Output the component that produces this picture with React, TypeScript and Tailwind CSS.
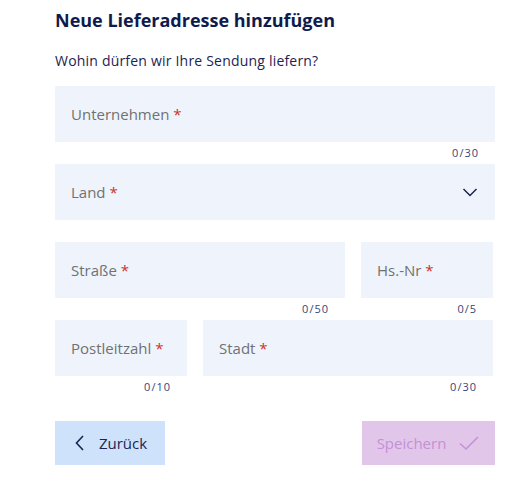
import React from 'react';

type FieldProps = { label: string; max?: number; className?: string; select?: boolean };

function Field({ label, max, className = '', select }: FieldProps) {
  return (
    <div className={`flex flex-col ${className}`}>
      <div className="h-[56px] bg-[#eff4fc] flex items-center justify-between pl-4 pr-4">
        <span className="text-[15px] text-[#717171]">
          {label} <span className="text-[#d0312d]">*</span>
        </span>
        {select && (
          <svg width="18" height="18" viewBox="0 0 18 18" fill="none" stroke="#1b2452" strokeWidth="1.5">
            <path d="M2.5 6 L9 12.5 L15.5 6" />
          </svg>
        )}
      </div>
      <div className="h-[22px] flex items-center justify-end pr-[16px] text-[11px] tracking-[1px] text-[#3a4378]">
        {max !== undefined ? `0/${max}` : ''}
      </div>
    </div>
  );
}

export default function App() {
  return (
    <main className="w-[532px] h-[490px] bg-white pl-[55px] pr-[37px] pt-[8px]" style={{ fontFamily: '"Open Sans", "Liberation Sans", sans-serif' }}>
      <h1 className="text-[18px] font-bold text-[#0f1b4c] leading-[24px]">Neue Lieferadresse hinzufügen</h1>
      <p className="mt-[19px] text-[14px] tracking-[0.2px] text-[#1b2452] leading-[20px]">Wohin dürfen wir Ihre Sendung liefern?</p>

      <div className="mt-[15px] flex flex-col">
        <Field label="Unternehmen" max={30} />
        <Field label="Land" select />
        <div className="flex gap-4">
          <Field label="Straße" max={50} className="w-[290px]" />
          <Field label="Hs.-Nr" max={5} className="w-[132px]" />
        </div>
        <div className="flex gap-4">
          <Field label="Postleitzahl" max={10} className="w-[132px]" />
          <Field label="Stadt" max={30} className="w-[290px]" />
        </div>
      </div>

      <div className="mt-[23px] flex justify-between">
        <button className="h-[44px] w-[110px] bg-[#cfe2fb] flex items-center justify-center gap-3 text-[15px] text-[#1b2452]">
          <svg width="14" height="18" viewBox="0 0 14 18" fill="none" stroke="#1b2452" strokeWidth="1.6">
            <path d="M10 2 L3.5 9 L10 16" />
          </svg>
          Zurück
        </button>
        <button className="h-[44px] w-[133px] bg-[#e2c6ea] flex items-center justify-center gap-3 text-[15px] text-[#c391d6]">
          Speichern
          <svg width="22" height="18" viewBox="0 0 22 18" fill="none" stroke="#c391d6" strokeWidth="1.6">
            <path d="M2 9.5 L8 15 L20 3" />
          </svg>
        </button>
      </div>
    </main>
  );
}
